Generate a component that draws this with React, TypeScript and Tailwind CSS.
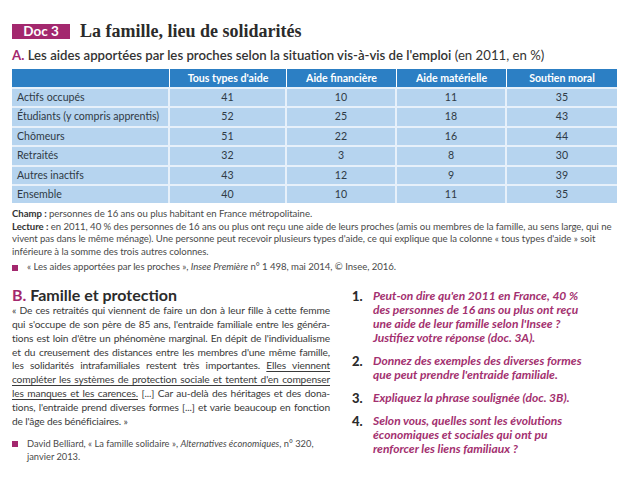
const rows = [
  ["Actifs occupés", "41", "10", "11", "35"],
  ["Étudiants (y compris apprentis)", "52", "25", "18", "43"],
  ["Chômeurs", "51", "22", "16", "44"],
  ["Retraités", "32", "3", "8", "30"],
  ["Autres inactifs", "43", "12", "9", "39"],
  ["Ensemble", "40", "10", "11", "35"],
];

const headers = ["Tous types d'aide", "Aide financière", "Aide matérielle", "Soutien moral"];
const colW = ["w-[117px]", "w-[110px]", "w-[110px]", "w-[110px]"];

const questions = [
  {
    n: "1.",
    text: "Peut-on dire qu'en 2011 en France, 40 % des personnes de 16 ans ou plus ont reçu une aide de leur famille selon l'Insee ? Justifiez votre réponse (doc. 3A).",
  },
  { n: "2.", text: "Donnez des exemples des diverses formes que peut prendre l'entraide familiale." },
  { n: "3.", text: "Expliquez la phrase soulignée (doc. 3B)." },
  {
    n: "4.",
    text: "Selon vous, quelles sont les évolutions économiques et sociales qui ont pu renforcer les liens familiaux ?",
  },
];

// justified line of the quote
const Line = ({ children, last }: { children: React.ReactNode; last?: boolean }) => (
  <span
    className={
      last ? "block whitespace-nowrap" : "block whitespace-nowrap text-justify [text-align-last:justify]"
    }
  >
    {children}
  </span>
);

const App = () => {
  return (
    <div className="w-[638px] h-[479px] bg-white overflow-hidden pl-[12px] pt-[24px] font-['Lato',sans-serif] text-[#3a3a3a]">
      {/* title */}
      <div className="flex items-center gap-[10px] h-[15px]">
        <div className="bg-[#a3286e] text-white font-bold text-[13.5px] leading-[15px] w-[58px] text-center">
          Doc 3
        </div>
        <h1 className="font-['Liberation_Serif',serif] font-bold text-[18px] leading-[15px] text-[#2b2b2b]">
          La famille, lieu de solidarités
        </h1>
      </div>

      <div className="mt-[7px] text-[13.2px] leading-[18px] text-[#333]">
        <span className="font-bold text-[#a3286e]">A.</span>{" "}
        <span className="font-semibold">
          Les aides apportées par les proches selon la situation vis-à-vis de l'emploi
        </span>{" "}
        <span className="font-normal">(en 2011, en %)</span>
      </div>

      {/* table */}
      <div className="mt-[5px] w-[605px] text-[10.6px]">
        <div className="flex h-[18px] bg-[#2c7fc4] text-white font-bold items-center">
          <div className="w-[158px] h-full border-r border-white"></div>
          {headers.map((h, i) => (
            <div
              key={h}
              className={
                i < 3
                  ? colW[i] + " text-center h-full leading-[18px] border-r border-white"
                  : colW[i] + " text-center h-full leading-[18px]"
              }
            >
              {h}
            </div>
          ))}
        </div>
        {rows.map((r) => (
          <div key={r[0]} className="flex h-[19.4px] bg-[#b6d4ef] border-t-2 border-[#e6f0fa] text-[#2f3a45]">
            <div className="w-[158px] pl-[5px] leading-[17px] border-r-2 border-[#e6f0fa] whitespace-nowrap overflow-hidden">
              {r[0]}
            </div>
            {r.slice(1).map((c, i) => (
              <div
                key={i}
                className={
                  i < 3
                    ? colW[i] + " text-center leading-[17px] border-r-2 border-[#e6f0fa]"
                    : colW[i] + " text-center leading-[17px]"
                }
              >
                {c}
              </div>
            ))}
          </div>
        ))}
      </div>

      {/* notes */}
      <div className="mt-[5px] w-[607px] text-[9.6px] leading-[12.5px] tracking-[-0.05px] text-[#4a4a4a]">
        <p>
          <span className="font-bold text-[#333]">Champ :</span> personnes de 16 ans ou plus habitant en France
          métropolitaine.
        </p>
        <p>
          <span className="font-bold text-[#333]">Lecture :</span> en 2011, 40 % des personnes de 16 ans ou plus ont reçu
          une aide de leurs proches (amis ou membres de la famille, au sens large, qui ne vivent pas dans le même ménage).
          Une personne peut recevoir plusieurs types d'aide, ce qui explique que la colonne « tous types d'aide » soit
          inférieure à la somme des trois autres colonnes.
        </p>
        <p className="mt-[3px] flex items-center gap-[9px]">
          <span className="w-[6px] h-[6px] bg-[#a3286e] inline-block"></span>
          <span>
            « Les aides apportées par les proches », <i>Insee Première</i> n° 1 498, mai 2014, © Insee, 2016.
          </span>
        </p>
      </div>

      {/* section B */}
      <div className="mt-[12px] flex">
        <div className="w-[318px]">
          <h2 className="text-[16px] leading-[18px] font-bold text-[#2b2b2b]">
            <span className="text-[#a3286e]">B.</span> Famille et protection
          </h2>
          <p className="text-[10.2px] leading-[13.9px] tracking-[-0.15px] text-[#3a3a3a]">
            <Line>« De ces retraités qui viennent de faire un don à leur fille à cette femme</Line>
            <Line>qui s'occupe de son père de 85 ans, l'entraide familiale entre les généra-</Line>
            <Line>tions est loin d'être un phénomène marginal. En dépit de l'individualisme</Line>
            <Line>et du creusement des distances entre les membres d'une même famille,</Line>
            <Line>
              les solidarités intrafamiliales restent très importantes.{" "}
              <span className="underline underline-offset-2">Elles viennent</span>
            </Line>
            <Line>
              <span className="underline underline-offset-2">
                compléter les systèmes de protection sociale et tentent d'en compenser
              </span>
            </Line>
            <Line>
              <span className="underline underline-offset-2">les manques et les carences.</span> [...] Car au-delà des
              héritages et des dona-
            </Line>
            <Line>tions, l'entraide prend diverses formes [...] et varie beaucoup en fonction</Line>
            <Line last>de l'âge des bénéficiaires. »</Line>
          </p>
          <div className="mt-[9px] flex gap-[9px] text-[9.3px] leading-[12.5px] text-[#4a4a4a]">
            <span className="w-[6px] h-[6px] bg-[#a3286e] inline-block mt-[3px] shrink-0"></span>
            <span>
              David Belliard, « La famille solidaire », <i>Alternatives économiques</i>, n° 320,
              <br />
              janvier 2013.
            </span>
          </div>
        </div>

        <div className="ml-[22px] w-[232px] pt-[3px] flex flex-col gap-[9px]">
          {questions.map((q) => (
            <div key={q.n} className="flex">
              <span className="w-[21px] shrink-0 font-black text-[13px] leading-[14px] text-[#2b2b2b]">{q.n}</span>
              <span className="italic font-bold text-[12px] leading-[14px] text-[#a3306f]">{q.text}</span>
            </div>
          ))}
        </div>
      </div>
    </div>
  );
};

export default App;
